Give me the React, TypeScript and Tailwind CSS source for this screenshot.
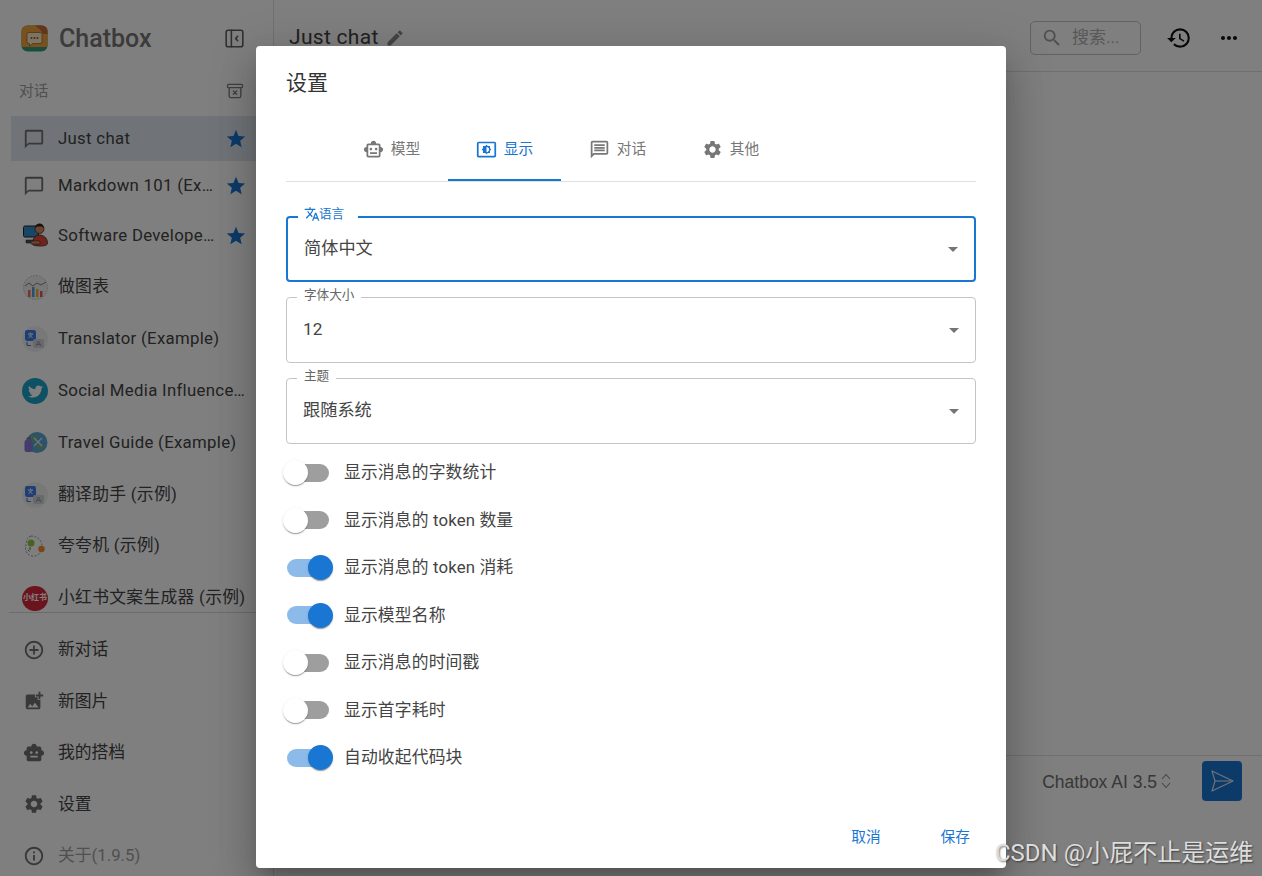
import React from "react";
import {
  MdChatBubbleOutline, MdStar, MdAddCircleOutline, MdAddPhotoAlternate, MdSmartToy, MdOutlineSmartToy,
  MdSettings, MdInfoOutline, MdEdit, MdSearch, MdHistory, MdMoreHoriz, MdSettingsBrightness,
  MdOutlineMessage, MdTranslate, MdArrowDropDown,
} from "react-icons/md";
import { FaTwitter } from "react-icons/fa";
import { TbLayoutSidebarLeftCollapse } from "react-icons/tb";

const ArchiveX = () => (
  <svg width="20" height="20" viewBox="0 0 24 24" fill="none" stroke="#808080" strokeWidth="1.6" strokeLinecap="round" strokeLinejoin="round">
    <rect x="3" y="4" width="18" height="4" rx="1" />
    <path d="M5 8v10a2 2 0 0 0 2 2h10a2 2 0 0 0 2-2V8" />
    <path d="M10 12l4 4M14 12l-4 4" />
  </svg>
);

const Logo = () => (
  <svg width="27" height="27" viewBox="0 0 27 27">
    <rect x="0.5" y="0.5" width="26" height="26" rx="6" fill="#2f9e78" />
    <path d="M6 .5h15a5.5 5.5 0 0 1 5.5 5.5v16H.5V6A5.5 5.5 0 0 1 6 .5z" fill="#f2a33c" />
    <path d="M14 .5h7a5.5 5.5 0 0 1 5.5 5.5v3H22C20 5 17 3 14 .5z" fill="#c9683a" />
    <path d="M8 7.5h11a2 2 0 0 1 2 2v7a2 2 0 0 1-2 2h-7l-3.500 2.500V18.500H8a2 2 0 0 1-2-2v-7a2 2 0 0 1 2-2z" fill="#fde8c4" stroke="#7a4a20" strokeWidth="0.6" />
    <circle cx="10.500" cy="13" r="1" fill="#8a5a2a" /><circle cx="13.500" cy="13" r="1" fill="#8a5a2a" /><circle cx="16.500" cy="13" r="1" fill="#8a5a2a" />
  </svg>
);

const DevAvatar = () => (
  <svg width="25" height="25" viewBox="0 0 25 25">
    <rect x="0.500" y="3" width="15" height="11" rx="1.500" fill="#2f8fc9" stroke="#222" />
    <path d="M3 17h8v3H3z" fill="#555" stroke="#222" strokeWidth="0.500" />
    <circle cx="16.500" cy="6" r="4.500" fill="#d98a5f" stroke="#222" strokeWidth="0.700" />
    <path d="M12 5a4.500 4.500 0 0 1 9 0l-2-1.500h-5z" fill="#33211a" />
    <path d="M9.500 21c0-6 3-9 7-9s8 3 8 8c0 2-2 3-7 3s-8-.5-8-2z" fill="#e2463c" stroke="#222" strokeWidth="0.700" />
    <path d="M8 18h9v3H8z" fill="#d98a5f" stroke="#222" strokeWidth="0.500" />
  </svg>
);

const ChartAvatar = () => (
  <svg width="25" height="25" viewBox="0 0 25 25">
    <circle cx="12.500" cy="12.500" r="12" fill="#f0f0f0" stroke="#bbb" strokeDasharray="1.500 1.500" />
    <path d="M2 11l4-3 4 3 4-3 4 2 5-3" fill="none" stroke="#666" strokeWidth="0.800" />
    <rect x="5" y="15" width="2.500" height="7" fill="#ef6b5b" />
    <rect x="9" y="12" width="2.500" height="10" fill="#4aa3df" />
    <rect x="13" y="14" width="2.500" height="8" fill="#f0b429" />
    <rect x="17" y="16" width="2.500" height="6" fill="#e2566b" />
  </svg>
);

const TransAvatar = () => (
  <svg width="26" height="26" viewBox="0 0 26 26">
    <circle cx="13" cy="13" r="13" fill="#f1f1f1" />
    <rect x="3" y="4" width="11" height="11" rx="2" fill="#3f7fe8" />
    <rect x="11" y="13" width="11" height="9" rx="2" fill="#cfd3da" />
    <path d="M6 8h5M8.500 6.500v1.500M6.500 12l4-4M7 8.500l3.500 3.500" stroke="#fff" strokeWidth="0.900" fill="none" />
    <path d="M14 20l2.500-5 2.500 5M15 18.500h3" stroke="#8a92a0" strokeWidth="0.900" fill="none" />
    <path d="M5 16v2.500a1 1 0 0 0 1 1h3" stroke="#3f7fe8" strokeWidth="1.200" fill="none" />
  </svg>
);

const TwitterAvatar = () => (
  <div className="flex h-[26px] w-[26px] items-center justify-center rounded-full bg-[#1da1c9] text-white">
    <FaTwitter size={15} />
  </div>
);

const GlobeAvatar = () => (
  <svg width="25" height="25" viewBox="0 0 25 25">
    <circle cx="14" cy="11.500" r="10.500" fill="#5aa7d6" />
    <path d="M8 5c3-2 6-1 7 1s-2 4-4 4-5 2-6 0 1-4 3-5zM15 13c3-1 6 0 5 3s-4 4-5 3-2-5 0-6z" fill="#6fae8f" />
    <path d="M11 7l8 8M19 7l-8 8" stroke="#dfe8ef" strokeWidth="1.200" />
    <rect x="1.500" y="9" width="8" height="12" rx="2" fill="#8a76d8" />
    <path d="M4 9V7h3v2" fill="none" stroke="#6a58b8" />
  </svg>
);

const PraiseAvatar = () => (
  <svg width="25" height="25" viewBox="0 0 25 25">
    <path d="M8 2c6 0 11 4 11 10s-4 11-10 10S2 16 3 10 5 3 8 2z" fill="none" stroke="#999" strokeDasharray="2 1.500" />
    <circle cx="8" cy="9" r="3.500" fill="#8dc63f" />
    <circle cx="18.500" cy="15" r="3.200" fill="#f28c28" />
    <path d="M7 13v3M5 16l1.500 1.500" stroke="#666" />
  </svg>
);

const XhsAvatar = () => (
  <div className="flex h-[25px] w-[26px] items-center justify-center rounded-full bg-[#d9283c] text-[8px] font-bold leading-none text-white">
    小红书
  </div>
);

const Star = () => <MdStar size={22} className="shrink-0 text-[#1976d2]" />;

const Bubble = () => <MdChatBubbleOutline size={22} className="mr-[3px] text-[#707070]" />;

type Row = { name: string; icon: React.ReactNode; h: string; star?: boolean; active?: boolean };

const rows: Row[] = [
  { name: "Just chat", icon: <Bubble />, h: "h-[45px]", star: true, active: true },
  { name: "Markdown 101 (Example)", icon: <Bubble />, h: "h-[49px]", star: true },
  { name: "Software Developer (Example)", icon: <DevAvatar />, h: "h-[51px]", star: true },
  { name: "做图表", icon: <ChartAvatar />, h: "h-[52px]" },
  { name: "Translator (Example)", icon: <TransAvatar />, h: "h-[52px]" },
  { name: "Social Media Influencer (Example)", icon: <TwitterAvatar />, h: "h-[52px]" },
  { name: "Travel Guide (Example)", icon: <GlobeAvatar />, h: "h-[52px]" },
  { name: "翻译助手 (示例)", icon: <TransAvatar />, h: "h-[51px]" },
  { name: "夸夸机 (示例)", icon: <PraiseAvatar />, h: "h-[52px]" },
  { name: "小红书文案生成器 (示例)", icon: <XhsAvatar />, h: "h-[52px]" },
];

const bottom = [
  { name: "新对话", icon: <MdAddCircleOutline size={22} className="text-[#707070]" /> },
  { name: "新图片", icon: <MdAddPhotoAlternate size={22} className="text-[#707070]" /> },
  { name: "我的搭档", icon: <MdSmartToy size={22} className="text-[#707070]" /> },
  { name: "设置", icon: <MdSettings size={22} className="text-[#707070]" /> },
];

const Select = ({ label, value, focused }: { label: React.ReactNode; value: string; focused?: boolean }) => (
  <div className={`relative flex h-[66px] items-center rounded px-[16px] ${focused ? "border-2 border-[#1976d2]" : "border border-[#c4c4c4]"}`}>
    <span
      className={`absolute left-[10px] flex h-[16px] items-center whitespace-nowrap bg-white text-[12.6px] ${
        focused ? "top-[-12px] w-[60px] pl-[6px] text-[#1976d2]" : "top-[-11px] px-[7px] text-[#666666]"
      }`}
    >
      {label}
    </span>
    <span className="text-[17.2px] text-[#444444]">{value}</span>
    <MdArrowDropDown size={24} className="ml-auto mr-[-7px] text-[#757575]" />
  </div>
);

const Toggle = ({ label, on }: { label: string; on?: boolean }) => (
  <div className="flex h-[47.5px] items-center">
    <div className={`relative ml-px h-[18px] w-[42px] rounded-full ${on ? "bg-[#8cbbe9]" : "bg-[#9e9e9e]"}`}>
      <div
        className={`absolute top-[-3.5px] h-[25px] w-[25px] rounded-full shadow-[0_2px_1px_-1px_rgba(0,0,0,.2),0_1px_1px_0_rgba(0,0,0,.14),0_1px_3px_0_rgba(0,0,0,.12)] ${
          on ? "right-[-4px] bg-[#1976d2]" : "left-[-4px] bg-white"
        }`}
      />
    </div>
    <span className="ml-[15px] text-[16.8px] tracking-[0.15px] text-[#444444]">{label}</span>
  </div>
);

const tabs = [
  { name: "模型", icon: <MdOutlineSmartToy size={21} /> },
  { name: "显示", icon: <MdSettingsBrightness size={21} />, active: true },
  { name: "对话", icon: <MdOutlineMessage size={21} /> },
  { name: "其他", icon: <MdSettings size={21} /> },
];

export default function App() {
  return (
    <div className="relative flex h-[876px] w-full overflow-hidden bg-white font-[Roboto,'Noto_Sans_CJK_SC',sans-serif]">
      <aside className="flex w-[274px] shrink-0 flex-col border-r border-[#e0e0e0]">
        <div className="flex h-[76px] shrink-0 items-center pl-[21px] pr-[26px]">
          <Logo />
          <span className="ml-[11px] text-[25px] font-medium leading-none text-[#777777]">Chatbox</span>
          <TbLayoutSidebarLeftCollapse size={25} strokeWidth={1.5} className="ml-auto text-[#606060]" />
        </div>
        <div className="flex h-[30px] shrink-0 items-center pl-[19px] pr-[28px]">
          <span className="text-[14.7px] text-[#a0a0a0]">对话</span>
          <span className="ml-auto"><ArchiveX /></span>
        </div>
        <div className="mt-[10px] flex shrink-0 flex-col pl-[11px] pr-[8px]">
          {rows.map((r) => (
            <div key={r.name} className={`flex shrink-0 items-center pl-[11px] pr-[18px] ${r.h} ${r.active ? "bg-[#e0e9f0]" : ""}`}>
              <span className="flex w-[26px] shrink-0 items-center justify-center">{r.icon}</span>
              <span className={`ml-[10px] min-w-0 flex-1 truncate text-[16.8px] tracking-[0.3px] text-[#444444] ${r.star ? "mr-[10px]" : ""}`}>{r.name}</span>
              {r.star && <Star />}
            </div>
          ))}
        </div>
        <div className="ml-[9px] mt-[-12px] h-px shrink-0 bg-[#d8d8d8]" />
        <div className="mt-[11px] flex flex-col pl-[22px]">
          {bottom.map((b) => (
            <div key={b.name} className="flex h-[51.5px] shrink-0 items-center">
              <span className="flex w-[24px] items-center justify-center">{b.icon}</span>
              <span className="ml-[12px] text-[16.8px] text-[#444444]">{b.name}</span>
            </div>
          ))}
          <div className="flex h-[51.5px] shrink-0 items-center">
            <span className="flex w-[24px] items-center justify-center"><MdInfoOutline size={22} className="text-[#707070]" /></span>
            <span className="ml-[12px] text-[16.8px] text-[#a0a0a0]">关于(1.9.5)</span>
          </div>
        </div>
      </aside>

      <main className="flex min-w-0 flex-1 flex-col">
        <header className="flex h-[72px] shrink-0 items-center border-b border-[#e0e0e0] pl-[15px] pr-[21px] pt-[4px]">
          <span className="text-[21px] tracking-[0.3px] text-[#444444]">Just chat</span>
          <MdEdit size={20} className="ml-[6px] text-[#8a8a8a]" />
          <div className="ml-auto flex h-[34px] w-[111px] items-center rounded-[5px] border border-[#c4c4c4] pl-[10px]">
            <MdSearch size={22} className="text-[#9e9e9e]" />
            <span className="ml-[9px] text-[17px] text-[#b0b0b0]">搜索...</span>
          </div>
          <MdHistory size={26} className="ml-[25px] text-[#111111]" />
          <MdMoreHoriz size={24} className="ml-[25px] text-[#111111]" />
        </header>
        <div className="flex-1" />
        <footer className="flex h-[121px] shrink-0 items-start justify-end border-t border-[#e0e0e0] pr-[20px] pt-[5px]">
          <span className="mt-[8px] font-['Liberation_Sans',sans-serif] text-[17.5px] text-[#707070]">Chatbox AI 3.5</span>
          <svg width="12" height="18" viewBox="0 0 12 18" fill="none" stroke="#8a8a8a" strokeWidth="1.100" className="ml-[3px] mt-[11px]">
            <path d="M2 7l4-4.500L10 7M2 11l4 4.500 4-4.500" />
          </svg>
          <div className="ml-[30px] flex h-[40px] w-[40px] items-center justify-center rounded bg-[#1976d2]">
            <svg width="26" height="26" viewBox="0 0 26 26" fill="none" stroke="#e8e8e8" strokeWidth="1.100" strokeLinejoin="round">
              <path d="M3 3l21 10L3 23l3-10z" />
              <path d="M6 13h18" />
            </svg>
          </div>
        </footer>
      </main>

      <div className="absolute inset-0 flex justify-center bg-black/50 pt-[46px]">
        <div className="flex h-[822px] w-[750px] flex-col rounded bg-white px-[30px] shadow-[0_11px_15px_-7px_rgba(0,0,0,.2),0_24px_38px_3px_rgba(0,0,0,.14),0_9px_46px_8px_rgba(0,0,0,.12)]">
          <h2 className="flex h-[74px] shrink-0 items-center pt-[2px] text-[21px] font-normal text-[#333333]">设置</h2>
          <div className="flex h-[62px] shrink-0 border-b border-[#e0e0e0] pl-[49px]">
            {tabs.map((t) => (
              <div
                key={t.name}
                className={`flex w-[113px] items-center justify-center gap-[7px] text-[14.7px] ${
                  t.active ? "border-b-2 border-[#1976d2] pb-[1px] text-[#1976d2]" : "pb-[3px] text-[#777777]"
                }`}
              >
                {t.icon}
                <span>{t.name}</span>
              </div>
            ))}
          </div>
          <div className="mt-[34px] flex flex-col gap-[15px]">
            <Select
              focused
              value="简体中文"
              label={<><MdTranslate size={16} className="-mr-px" />语言</>}
            />
            <Select label="字体大小" value="12" />
            <Select label="主题" value="跟随系统" />
          </div>
          <div className="mt-[5px] flex flex-col">
            <Toggle label="显示消息的字数统计" />
            <Toggle label="显示消息的 token 数量" />
            <Toggle label="显示消息的 token 消耗" on />
            <Toggle label="显示模型名称" on />
            <Toggle label="显示消息的时间戳" />
            <Toggle label="显示首字耗时" />
            <Toggle label="自动收起代码块" on />
          </div>
          <div className="mt-auto flex h-[42px] items-start justify-end gap-[60px] pr-[6px] text-[14.7px] text-[#1976d2]">
            <span>取消</span>
            <span>保存</span>
          </div>
        </div>
      </div>

      <span className="absolute left-[995px] top-[837px] whitespace-nowrap text-[24px] leading-[32px] text-[#dddddd] [text-shadow:1px_1px_2px_rgba(0,0,0,0.5)]">
        CSDN @小屁不止是运维
      </span>
    </div>
  );
}
